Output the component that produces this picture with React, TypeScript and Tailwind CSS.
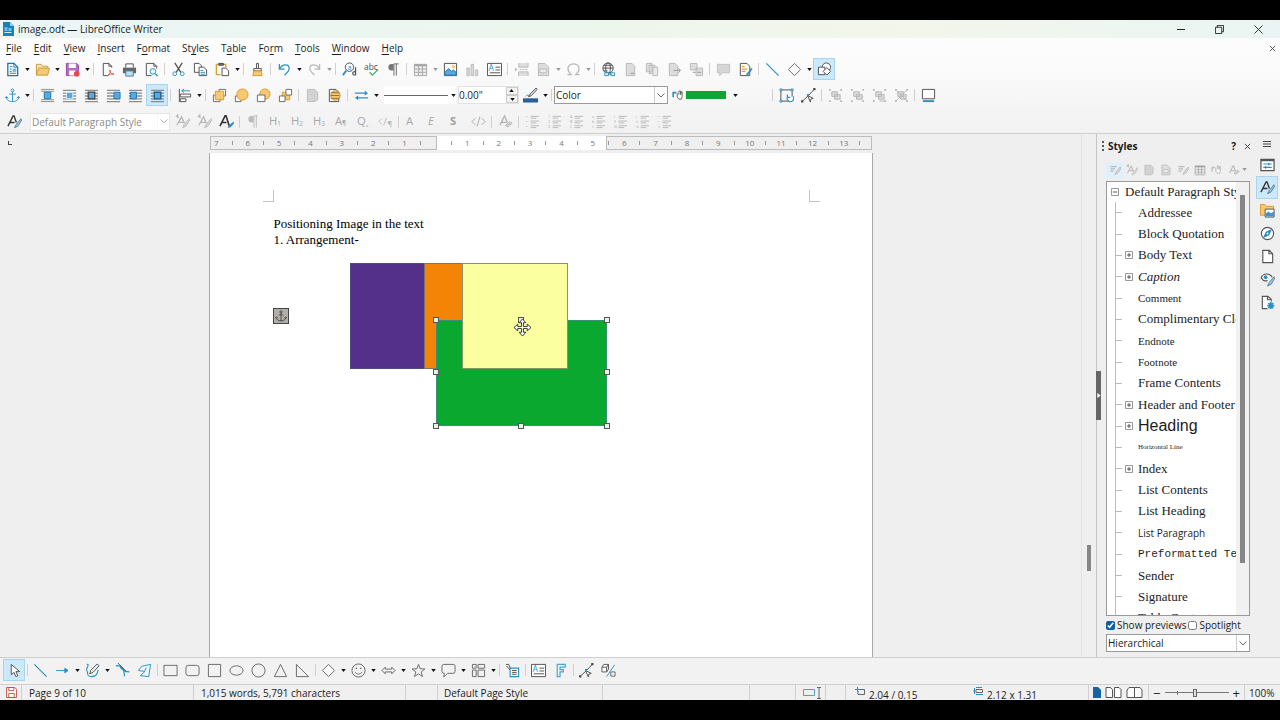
import { useState } from 'react';
import type { ReactNode } from 'react';
import clsx from 'clsx';

const DARK = '#4d4d4d';
const BLUE = '#2b8fc4';
const DIM = '#b9b9b9';
const GOLD = '#f5c871';

const wrapLines = (
  <path d="M1 2.500h14M1 5.500h14M1 8.500h14M1 11.500h14M1 14.500h14" stroke="#8c8c8c" strokeWidth="1.400" />
);

function letters(text: string, sub?: string, color = '#a8a8a8', extra = '') {
  return (
    <text x="1" y="12" fontSize="12" fill={color} className={extra}>
      {text}
      {sub && (
        <tspan fontSize="7" dy="1">
          {sub}
        </tspan>
      )}
    </text>
  );
}

function list(marks: string[]) {
  return (
    <g stroke="none" fill="#a8a8a8">
      <path d="M6 2.500h9M6 4.500h6M6 7.500h9M6 9.500h6M6 12.500h9M6 14.500h6" stroke="#b8b8b8" />
      {marks.map((m, i) => (
        <text key={i} x="1" y={4 + i * 5.500} fontSize="4">
          {m}
        </text>
      ))}
    </g>
  );
}

function group(extra: ReactNode) {
  return (
    <g stroke={DIM}>
      <path d="M4 4h6v5H4zM7 7h6v5H7z" fill="#d8d8d8" />
      {extra}
      <path d="M1 1h2v2H1zM13 1h2v2h-2zM1 13h2v2H1zM13 13h2v2h-2z" fill={DIM} stroke="none" />
    </g>
  );
}

const ICONS: Record<string, ReactNode> = {
  doc: (
    <>
      <path d="M3 1.500h6.500l4 4v9H3z" fill="#fff" stroke="#1779ba" strokeWidth="1.400" />
      <path d="M9.500 1.500v4h4" stroke="#1779ba" />
      <path d="M5 5h3M5 7.500h2M5 12h7M5 10h2" stroke="#1779ba" />
      <path d="M8 7h4v3.500H8z" fill="#6fb6e0" stroke="none" />
    </>
  ),
  open: (
    <>
      <path d="M1.500 14V2.500h5l1.500 2h5.500V7" fill="#fbe3b0" stroke="#c9993f" />
      <path d="M1.500 14l2.500-7.500h11.500L13.500 14z" fill={GOLD} stroke="#c9993f" />
    </>
  ),
  save: (
    <>
      <path d="M1.500 1.500h11l2 2v11h-13z" fill="#b46cc0" stroke="#8e44a0" />
      <path d="M4 1.500h7.500v5H4zM4.500 9h6.500v5.500H4.500z" fill="#fff" stroke="none" />
      <circle cx="12.500" cy="12.500" r="3" fill="#e5484d" stroke="none" />
    </>
  ),
  pdf: (
    <>
      <path d="M12.500 6V4.500l-3-3h-6v13h5M9.500 1.500v3h3" stroke={DARK} />
      <path d="M8.500 14.500c3-3 3-6 2-6s1 5 4.500 4.500c-2-1-5 0-6.500 1.500z" stroke="#d9534f" />
    </>
  ),
  print: (
    <>
      <path d="M4 6V2h8v4" fill="#fff" stroke={DARK} />
      <path d="M1 6h14v6H1z" fill="#666" stroke="none" />
      <path d="M4 9.500h8V15H4z" fill="#bfe0f2" stroke="#3b7ea3" />
    </>
  ),
  preview: (
    <>
      <path d="M13.500 7V4.500l-3-3h-8v13H8M10.500 1.500v3h3" stroke={DARK} />
      <circle cx="9.500" cy="10" r="3" stroke={BLUE} fill="#e6f4fb" />
      <path d="M12 12.500l2.500 2.500" stroke={BLUE} strokeWidth="1.500" />
    </>
  ),
  cut: (
    <>
      <path d="M4 1l6.500 10M12 1L5.500 11" stroke={DARK} strokeWidth="1.300" />
      <circle cx="4" cy="12.500" r="2" stroke={BLUE} />
      <circle cx="12" cy="12.500" r="2" stroke={BLUE} />
    </>
  ),
  copy: (
    <>
      <path d="M1.500 1.500h5l2.500 2.500v7H1.500z" fill="#fff" stroke={DARK} />
      <path d="M6.500 5.500h5l3 3v6h-8z" fill="#fff" stroke={DARK} />
      <path d="M8 9h3M8 11h5M8 13h5" stroke={BLUE} />
    </>
  ),
  paste: (
    <>
      <path d="M6 13.500H1.500v-11h10V6" fill="#fff" stroke="#e0a030" strokeWidth="1.500" />
      <path d="M4 1.500h5v2H4z" fill="#777" stroke={DARK} />
      <path d="M7.500 6.500h4l3 3v5h-7z" fill="#fff" stroke={DARK} />
    </>
  ),
  brush: (
    <>
      <path d="M7 1.500h2V7H7z" fill="#fff" stroke={DARK} />
      <path d="M4 7h8v2.500H4z" fill="#fff" stroke={DARK} />
      <path d="M4 9.500h8l1 5H3z" fill={GOLD} stroke="#d99a2b" />
    </>
  ),
  undo: (
    <path d="M2.500 2v5.500H8M2.500 7.500C6 1.500 13 2 13 7c0 3-3 5-5 7" stroke={BLUE} strokeWidth="1.300" />
  ),
  redo: (
    <path d="M13.500 2v5.500H8M13.500 7.500C10 1.500 3 2 3 7c0 3 3 5 5 7" stroke={DIM} strokeWidth="1.300" />
  ),
  find: (
    <>
      <circle cx="8" cy="5.500" r="4.500" stroke={DARK} />
      <path d="M4.500 9l-3.500 5" stroke={BLUE} strokeWidth="2" />
      <text x="6" y="8" fontSize="7" fill={BLUE}>
        a
      </text>
      <path d="M14.500 5.500v8.500M14.500 10.500c-4-1.500-4 5 0 3" stroke={DARK} strokeWidth="1.200" />
    </>
  ),
  spell: (
    <>
      <text x="0" y="8" fontSize="9" fill={DARK}>
        abc
      </text>
      <path d="M6 11l3 3 6-6" stroke="#4caf72" strokeWidth="1.400" />
    </>
  ),
  pilcrow: (
    <>
      <path d="M8 2H6a3 3 0 000 7h2z" fill="#777" stroke="none" />
      <path d="M8.500 14.500V2h5M11 2v12.500" stroke="#666" />
    </>
  ),
  table: (
    <>
      <path d="M1.500 2.500h13v12h-13z" fill="#eee" stroke="#a5a5a5" />
      <path d="M1.500 3.500h13" stroke="#a5a5a5" strokeWidth="2" />
      <path d="M1.500 7.500h13M1.500 11h13M6 4v10M10 4v10" stroke="#a5a5a5" />
    </>
  ),
  image: (
    <>
      <path d="M1.500 1.500h13v13h-13z" fill="#fff" stroke={DARK} />
      <circle cx="11" cy="5" r="1.800" fill={GOLD} stroke="none" />
      <path d="M2 14V11l4-4 3 3 2-1.500 3 2.500v3z" fill="#58a9de" stroke="#1b75b5" />
    </>
  ),
  chart: <path d="M2 6.500h2.500v8H2zM6.500 2.500H9v12H6.500zM11 8.500h2.500v6H11z" fill="#dcdcdc" stroke={DIM} />,
  textbox: (
    <>
      <path d="M.5 1.500h15v13H.5z" fill="#fff" stroke={DARK} />
      <text x="1.500" y="10" fontSize="9" fill={BLUE}>
        A
      </text>
      <path d="M9 5.500h5M9 8.500h5M3 11.500h11" stroke={DARK} />
    </>
  ),
  pagebreak: (
    <>
      <path d="M5 1v4.500h10V1M5 15v-4.500h10V15" fill="#ddd" stroke={DIM} />
      <path d="M6 8h9" stroke={DIM} strokeDasharray="2 1" />
      <path d="M1 6l3 2-3 2z" fill={DIM} stroke="none" />
    </>
  ),
  field: (
    <>
      <path d="M2.500 1.500h7l4 4v9h-11z" fill="#ddd" stroke={DIM} />
      <path d="M4 7.500h7v4H4z" fill="#eee" stroke={DIM} />
    </>
  ),
  omega: <path d="M1.500 13.500h4C-1 7 3 2 8 2s9 5 2.500 11.500h4" stroke={DIM} strokeWidth="1.400" />,
  link: (
    <>
      <circle cx="7.500" cy="6.500" r="5.500" stroke={DARK} />
      <ellipse cx="7.500" cy="6.500" rx="2.500" ry="5.500" stroke={DARK} />
      <path d="M2 6.500h11M3 3.500h9M3 9.500h4" stroke={DARK} />
      <path d="M4 11.500h4v3H4zM10.500 11.500h4v3h-4zM7 13h4.500" fill="#fff" stroke={BLUE} />
    </>
  ),
  footnote: (
    <>
      <path d="M3.500 1.500h6l3 3v10h-9z" fill="#ddd" stroke={DIM} />
      <path d="M8 12h4" stroke="#999" />
    </>
  ),
  endnote: (
    <>
      <path d="M1.500 1.500h6v9h-6zM4.500 3.500h6v9h-6z" fill="#ddd" stroke={DIM} />
      <path d="M8.500 5.500h5v9h-5z" fill="#e8e8e8" stroke={DIM} />
    </>
  ),
  bookmark: (
    <>
      <path d="M2.500 1.500h6l3 3v10h-9z" fill="#ddd" stroke={DIM} />
      <path d="M7 9h7M12 6.500L14.500 9 12 11.500" stroke="#999" />
    </>
  ),
  crossref: (
    <>
      <path d="M1.500 1.500h7v7h-7zM7.500 6.500h7v8h-7z" fill="#ddd" stroke={DIM} />
      <path d="M4 11h3M9 11h4" stroke="#999" />
    </>
  ),
  comment: <path d="M1.500 2.500h13v9H7l-3 3v-3H1.500z" fill="#d6d6d6" stroke="#c0c0c0" />,
  track: (
    <>
      <path d="M2.500 1.500h7l3 3v10h-10z" fill="#fff" stroke={DARK} />
      <path d="M4 5h3M4 7.500h6M4 10h4" stroke="#e0a030" strokeWidth="1.400" />
      <path d="M14.500 6l-5 6-1 2.500 2.500-1 4.500-6z" fill={BLUE} stroke="none" />
    </>
  ),
  line: <path d="M1.500 1.500l13 13" stroke={BLUE} strokeWidth="1.200" />,
  diamond: <path d="M8 1.500L14.500 8 8 14.500 1.500 8z" fill="#fafafa" stroke="#666" />,
  shapes: (
    <>
      <circle cx="10" cy="5.500" r="4.500" fill="#fff" stroke={DARK} />
      <path d="M1.500 5.500h7v8h-7z" fill="#fff" stroke={DARK} />
      <path d="M10.500 6l4 4-4 4-4-4z" fill="#fff" stroke={DARK} />
    </>
  ),
  anchor: (
    <>
      <circle cx="8" cy="2.500" r="1.500" stroke={BLUE} />
      <path d="M8 4v10.500M4.500 6.500h7M1.500 9.500c0 3.500 3 5 6.500 5s6.500-1.500 6.500-5M0 11l1.500-2L3.500 11M12.500 11l2-2L16 11" stroke={BLUE} />
    </>
  ),
  wrapOff: (
    <>
      <path d="M1 1.500h14M1 3.500h14M1 12.500h14M1 14.500h14" stroke="#8c8c8c" />
      <path d="M4.500 4.500h7v7h-7z" fill="#5aa9dd" stroke="#1f78b4" />
    </>
  ),
  wrapPage: (
    <>
      {wrapLines}
      <path d="M4.500 4.500h7v7h-7z" fill="#5aa9dd" stroke="#e9f5fc" />
    </>
  ),
  wrapOptimal: (
    <>
      {wrapLines}
      <path d="M4.500 4.500h7v7h-7z" fill="#5aa9dd" stroke="#444" strokeWidth="1.300" />
    </>
  ),
  wrapLeft: (
    <>
      {wrapLines}
      <path d="M8.500 4.500h6.500v7H8.500z" fill="#5aa9dd" stroke="#1f78b4" />
    </>
  ),
  wrapRight: (
    <>
      {wrapLines}
      <path d="M2.500 4.500h6.500v7H2.500z" fill="#5aa9dd" stroke="#1f78b4" />
    </>
  ),
  wrapThrough: (
    <>
      {wrapLines}
      <path d="M4.500 4.500h7v7h-7z" fill="#5aa9dd" stroke="#1a5e92" strokeWidth="1.400" />
    </>
  ),
  align: (
    <>
      <path d="M2.500 1v14" stroke={DARK} />
      <path d="M3.500 6.500h11v3h-11zM3.500 11.500h6v3h-6z" fill="#fff" stroke={DARK} />
      <path d="M14 3H5M7.500 1L5 3l2.500 2" stroke={BLUE} />
    </>
  ),
  front: (
    <>
      <path d="M7.500 1.500h7v7h-7zM1.500 7.500h7v7h-7z" fill="#fff" stroke="#666" />
      <path d="M3.500 3.500h9v9h-9z" fill={GOLD} stroke="#d99a2b" />
    </>
  ),
  forward: (
    <>
      <path d="M1.500 8.500h6v6h-6z" fill="#fff" stroke="#666" />
      <circle cx="9" cy="7" r="6" fill={GOLD} stroke="#d99a2b" />
    </>
  ),
  backward: (
    <>
      <circle cx="9.500" cy="6.500" r="5.500" fill={GOLD} stroke="#d99a2b" />
      <path d="M1.500 7.500h8v7h-8z" fill="#fff" stroke="#666" />
    </>
  ),
  back: (
    <>
      <path d="M4.500 4.500h8v8h-8z" fill={GOLD} stroke="#d99a2b" />
      <path d="M8.500 1.500h6v6h-6zM1.500 8.500h6v6h-6z" fill="#fff" stroke="#666" />
    </>
  ),
  toFore: <path d="M2.500 1.500h8l3 3v8l-3 2h-8z" fill="#d2d2d2" stroke="#bdbdbd" />,
  toBack: (
    <>
      <path d="M2.500 1.500h7l3 3v10h-10z" fill="#fff" stroke={DARK} />
      <circle cx="9" cy="8" r="5" fill={GOLD} stroke="#c98a1f" />
      <path d="M4 5h9M4 8h9M4 11h9" stroke="#8a7040" />
    </>
  ),
  arrows: (
    <>
      <path d="M1 5.500h11M4 10.500h11" stroke={BLUE} strokeWidth="1.200" />
      <path d="M11.500 3l3.500 2.500L11.500 8zM4.500 8L1 10.500 4.500 13z" fill={BLUE} stroke="none" />
    </>
  ),
  lineColor: (
    <>
      <path d="M14 0L7.500 6.500l-1.500 3 3-1.500L15 1.500z" fill="#e8e8e8" stroke={DARK} />
      <path d="M3 9c1-2 3-2 4 0" stroke={BLUE} />
      <path d="M0 11h16v4.500H0z" fill="#2a6099" stroke="none" />
    </>
  ),
  bucket: (
    <>
      <path d="M1.500 10V4.500h4" stroke={BLUE} strokeWidth="2" />
      <path d="M6.500 5v5l2 2.500h3l1-3.500V3.500h-1.500V7M8.500 7V2.500h2V7" fill="#fff" stroke={DARK} />
    </>
  ),
  rotate: (
    <>
      <path d="M2 2h12v12H2z" stroke={DARK} />
      <path d="M1 1h2v2H1zM13 1h2v2h-2zM1 13h2v2H1z" fill="#fff" stroke={BLUE} />
      <path d="M9 9.500a3.500 3.500 0 106-.5M9 7v3h3" fill="#fff" stroke={BLUE} strokeWidth="1.200" />
    </>
  ),
  points: (
    <>
      <path d="M1.500 14L8 8l6.500-7" stroke={DARK} />
      <path d="M7 8l6 3-2.500.8L10 15z" fill="#fff" stroke={DARK} />
      <path d="M0 13h2.500v2.500H0zM13 0h2.500v2.500H13z" fill={DARK} stroke="none" />
      <path d="M6.500 6.500h2v2h-2z" fill={BLUE} stroke="none" />
    </>
  ),
  group: group(null),
  ungroup: group(<path d="M10 13l4-4" />),
  enter: group(<path d="M8 14h6" />),
  exit: group(<path d="M2 2l12 12M14 2L2 14" />),
  caption: (
    <>
      <path d="M1.500 1.500h13v10h-13z" fill="#fff" stroke={DARK} />
      <path d="M2 14h12" stroke={BLUE} strokeWidth="2" />
    </>
  ),
  styleA: (
    <>
      <path d="M1 13L6.500 2h1L10 9M3.500 9H8" stroke="#333" strokeWidth="1.500" />
      <path d="M15 5l-5 6-2 3.500 3.500-1.500L16 6z" fill="#9fcde8" stroke="#4a7d98" />
    </>
  ),
  styleDim: (
    <>
      <path d="M2 12L7 3l3 7M4 9h5M1 2l3 2M3 0v4" stroke={DIM} strokeWidth="1.400" />
      <path d="M15 5l-5 6-2 3.500 3.500-1.500L16 6z" fill="#ddd" stroke={DIM} />
    </>
  ),
  styleEdit: (
    <>
      <path d="M1 13L6.500 2h1L11 13M3.500 9H8" stroke="#333" strokeWidth="1.700" />
      <path d="M15.500 8l-3.500 3-3 4 3.500-1 3.500-4z" fill={BLUE} stroke="none" />
    </>
  ),
  brushDim: (
    <>
      <path d="M2 3.500h8M2 6.500h6M2 9.500h4" stroke={DIM} strokeWidth="1.600" />
      <path d="M15 4l-5 6-2 4 3.500-2L16 6z" fill="#ddd" stroke={DIM} strokeWidth="1.300" />
    </>
  ),
  pilcrowDim: (
    <>
      <path d="M8 2H6a3 3 0 000 7h2z" fill="#bbb" stroke="none" />
      <path d="M8.500 14.500V2h4M11 2v12.500" stroke="#bbb" />
    </>
  ),
  h1: letters('H', '1'),
  h2: letters('H', '2'),
  h3: letters('H', '3'),
  para: letters('A', '¶'),
  quote: letters('Q', '„'),
  code: (
    <>
      <path d="M4 5L1 8l3 3M9 4l-3 8" stroke={DIM} />
      <text x="10" y="13" fontSize="8" fill="#b0b0b0">
        ¶
      </text>
    </>
  ),
  plainA: letters(' A', undefined, '#a8a8a8'),
  emph: letters(' E', undefined, '#a8a8a8', 'italic'),
  strong: letters(' S', undefined, '#a0a0a0', 'font-bold'),
  src: <path d="M4.500 4.500L1 8l3.500 3.500M11.500 4.500L15 8l-3.500 3.500M9.500 3l-3 10" stroke="#a8a8a8" />,
  clear: (
    <>
      <path d="M2 12L7 2l3 7M4 9h5" stroke="#b0b0b0" strokeWidth="1.300" />
      <path d="M8 12l5-4 2 2-5 4z" fill="#ccc" stroke={DIM} />
    </>
  ),
  bullets: list(['•', '•', '•']),
  numbers: list(['1', '2', '3']),
  upper: list(['A', 'B', 'C']),
  lower: list(['a', 'b', 'c']),
  roman: list(['I', 'II', 'III']),
  romanLow: list(['i', 'ii', 'iii']),
  noList: list(['•', '•', '×']),
  cursor: <path d="M4.500 1.500v11l3-2.500 2 4.500 2-1-2-4.300h4z" fill="#fff" stroke={DARK} />,
  lineArrow: <path d="M1 8h12M10.500 5.500L14 8l-3.500 2.500z" fill={BLUE} stroke={BLUE} />,
  pen: (
    <>
      <path d="M2 1.500c4 0-2 4 0 7s-1 6 5 6 6-4 7-7" stroke={BLUE} strokeWidth="1.200" />
      <path d="M13 1L6 8l-1 3.500L8.500 10l6.500-7z" fill="#eee" stroke={DARK} />
    </>
  ),
  connector: (
    <>
      <path d="M1 3c6-1 9 3 9 11M5.500 4c2 4 5 5.500 10 5.500" stroke={BLUE} strokeWidth="1.300" />
      <path d="M3 0l9 9" stroke={DARK} />
    </>
  ),
  polygon: (
    <>
      <path d="M5 3.500l9.500-2-2 13-9-1 5-4.500L1.500 8z" fill="#eef7fc" stroke={BLUE} />
      <path d="M8 9l2-4" stroke={BLUE} />
    </>
  ),
  rect: <path d="M1 2.500h14v11H1z" stroke="#666" />,
  rounded: <rect x="1" y="2.500" width="14" height="11" rx="2.500" stroke="#666" />,
  square: <path d="M1.500 1.500h13v13h-13z" stroke="#666" />,
  oval: <ellipse cx="8" cy="8" rx="7" ry="5" stroke="#666" />,
  circle: <circle cx="8" cy="8" r="7" stroke="#666" />,
  triangle: <path d="M8 1.500l6.500 13h-13z" stroke="#666" />,
  right: <path d="M1.500 1.500l13 13h-13z" stroke="#666" />,
  smile: (
    <>
      <circle cx="8" cy="8" r="7" stroke="#666" />
      <path d="M4.500 9.500c1 3 6 3 7 0" stroke="#666" />
      <path d="M5 5h1.500v1.500H5zM9.500 5H11v1.500H9.500z" fill="#666" stroke="none" />
    </>
  ),
  double: <path d="M1 8l3.500-3.500v2h7v-2L15 8l-3.500 3.500v-2h-7v2z" stroke="#666" />,
  star: <path d="M8 1.500l1.800 4.700 5 .2-4 3.100 1.500 4.900L8 11.600l-4.300 2.800 1.500-4.900-4-3.100 5-.2z" stroke="#666" />,
  callout: <path d="M3 1.500h10q2 0 2 2v5.500q0 2-2 2H7l-4 4 .5-4Q1 11 1 9V3.500q0-2 2-2z" stroke="#666" />,
  flow: (
    <path d="M1.500 1.500h4v4h-4zM7.500 1.500h7v4h-7zM1.500 7.500h4v7h-4zM7.500 7.500h7v7h-7z" stroke="#666" />
  ),
  calloutBox: (
    <>
      <path d="M1 1.500h3l2.500 6M1.500 3l4 4.500" stroke={DARK} />
      <path d="M5.500 5.500h9v9h-9z" fill="#fff" stroke={BLUE} strokeWidth="1.200" />
      <path d="M7.500 8h5M7.500 10h5M7.500 12h5" stroke={DARK} />
    </>
  ),
  fontwork: <path d="M4.500 1.500h8.500v3H7.500V7H11v2.500H7.500v5h-3z" fill="#eaf6fc" stroke="#4aa5d0" strokeWidth="1.300" />,
  extrude: (
    <>
      <path d="M1 4.500h5v5H1zM1 4.500l2-3h5l-2 3M8 1.500v5l-2 3" fill="#fff" stroke="#555" />
      <path d="M14.500 2L6 14.500" stroke={BLUE} />
      <path d="M10.500 9.500h4.500v4.500h-4.500z" stroke="#666" />
    </>
  ),
  props: (
    <>
      <path d="M1 2.500h14v12H1z" fill="#fff" stroke="#555" strokeWidth="1.300" />
      <path d="M1 3.500h14" stroke="#555" strokeWidth="2" />
      <path d="M3.500 7.500h9M3.500 11h9M9.500 6v3M6 9.500v3" stroke={BLUE} strokeWidth="1.200" />
    </>
  ),
  gallery: (
    <>
      <path d="M.5 13V1.500H5L6.500 3.500h8v9.500z" fill={GOLD} stroke="#d99a2b" />
      <path d="M5.500 6.500h9.500v8.500H5.500z" fill="#fff" stroke="#555" />
      <path d="M6 14.500v-3l3-2.500 2.500 2 3.500-2v5.500z" fill="#3f93cf" stroke="none" />
    </>
  ),
  compass: (
    <>
      <circle cx="8" cy="8" r="6.500" fill="#fff" stroke="#555" strokeWidth="1.200" />
      <path d="M12 4L9.500 9.500 4 12l2.500-5.500z" fill={BLUE} stroke={BLUE} />
      <circle cx="8" cy="8" r="1" fill="#fff" stroke="none" />
    </>
  ),
  page: <path d="M3 1.500h7l3.500 3.500v9.500H3zM9.500 1.500V5h4" fill="#fff" stroke="#555" strokeWidth="1.200" />,
  inspector: (
    <>
      <path d="M1 6C4 1 10 1 13 5.500M1 6c2 3 5 4 7 3" fill="#fff" stroke="#555" strokeWidth="1.200" />
      <circle cx="6" cy="5.500" r="2" fill={BLUE} stroke="none" />
      <path d="M15 5l-5 6-2 4 4-2 4-7z" fill="#9fcde8" stroke="#4a7d98" />
    </>
  ),
  gearDoc: (
    <>
      <path d="M8 14.500H2.500v-13h6l3.500 3V7M8 1.500V5h4" fill="#fff" stroke="#555" strokeWidth="1.200" />
      <path d="M11.500 7.500v7.500M7.800 11.300h7.500M9 8.500l5 5.500M14 8.500L9 14" stroke={BLUE} strokeWidth="1.700" />
    </>
  ),
};

function Icon({ name, className = 'size-4' }: { name: string; className?: string }) {
  return (
    <svg viewBox="0 0 16 16" fill="none" className={clsx('shrink-0', className)} aria-hidden="true">
      {ICONS[name]}
    </svg>
  );
}

function Caret({ dim }: { dim?: boolean }) {
  return (
    <svg viewBox="0 0 6 4" className="h-[3px] w-[5px] shrink-0" aria-hidden="true">
      <path d="M0 0h6L3 4z" fill={dim ? '#999' : '#111'} />
    </svg>
  );
}

type Item = { icon: string; label: string; drop?: boolean; dim?: boolean; active?: boolean } | '|';

const t = (icon: string, label: string, opts = ''): Item => ({
  icon,
  label,
  drop: opts.includes('v'),
  dim: opts.includes('d'),
  active: opts.includes('a'),
});

const STANDARD: Item[] = [
  t('doc', 'New', 'v'),
  t('open', 'Open', 'v'),
  t('save', 'Save', 'v'),
  '|',
  t('pdf', 'Export as PDF'),
  t('print', 'Print'),
  t('preview', 'Print preview'),
  '|',
  t('cut', 'Cut'),
  t('copy', 'Copy'),
  t('paste', 'Paste', 'v'),
  '|',
  t('brush', 'Clone formatting'),
  '|',
  t('undo', 'Undo', 'v'),
  t('redo', 'Redo', 'vd'),
  '|',
  t('find', 'Find and replace'),
  t('spell', 'Spelling'),
  t('pilcrow', 'Formatting marks'),
  '|',
  t('table', 'Table', 'vd'),
  t('image', 'Image'),
  t('chart', 'Chart', 'd'),
  t('textbox', 'Text box'),
  '|',
  t('pagebreak', 'Page break', 'd'),
  t('field', 'Field', 'vd'),
  t('omega', 'Special character', 'vd'),
  '|',
  t('link', 'Hyperlink'),
  t('footnote', 'Footnote', 'd'),
  t('endnote', 'Endnote', 'd'),
  t('bookmark', 'Bookmark', 'd'),
  t('crossref', 'Cross-reference', 'd'),
  '|',
  t('comment', 'Comment', 'd'),
  t('track', 'Track changes'),
  '|',
  t('line', 'Insert line'),
  t('diamond', 'Basic shapes', 'v'),
  t('shapes', 'Show draw functions', 'a'),
];

const OBJECT: Item[] = [
  t('anchor', 'Anchor', 'v'),
  '|',
  t('wrapOff', 'No wrap'),
  t('wrapPage', 'Parallel wrap'),
  t('wrapOptimal', 'Optimal wrap'),
  t('wrapLeft', 'Wrap before'),
  t('wrapRight', 'Wrap after'),
  t('wrapThrough', 'Wrap through', 'a'),
  '|',
  t('align', 'Align', 'v'),
  '|',
  t('front', 'Bring to front'),
  t('forward', 'Forward one'),
  t('backward', 'Back one'),
  t('back', 'Send to back'),
  '|',
  t('toFore', 'To foreground', 'd'),
  t('toBack', 'To background'),
  '|',
  t('arrows', 'Arrow style', 'v'),
];

const OBJECT_END: Item[] = [
  '|',
  t('rotate', 'Rotate'),
  t('points', 'Points'),
  '|',
  t('group', 'Group', 'd'),
  t('ungroup', 'Ungroup', 'd'),
  t('enter', 'Enter group', 'd'),
  t('exit', 'Exit group', 'd'),
  '|',
  t('caption', 'Caption'),
];

const FORMATTING: Item[] = [
  t('styleDim', 'Update style', 'd'),
  t('styleDim', 'New style', 'd'),
  t('styleEdit', 'Edit style'),
  '|',
  t('pilcrowDim', 'Default paragraph', 'd'),
  t('h1', 'Heading 1', 'd'),
  t('h2', 'Heading 2', 'd'),
  t('h3', 'Heading 3', 'd'),
  t('para', 'Body', 'd'),
  t('quote', 'Quotation', 'd'),
  t('code', 'Preformatted', 'd'),
  '|',
  t('plainA', 'No character style', 'd'),
  t('emph', 'Emphasis', 'd'),
  t('strong', 'Strong', 'd'),
  t('src', 'Source', 'd'),
  '|',
  t('clear', 'Clear formatting', 'd'),
  '|',
  t('bullets', 'Bullets', 'd'),
  t('numbers', 'Numbering', 'd'),
  t('upper', 'Uppercase list', 'd'),
  t('lower', 'Lowercase list', 'd'),
  t('roman', 'Roman list', 'd'),
  t('romanLow', 'Lowercase roman list', 'd'),
  t('noList', 'No list', 'd'),
];

const DRAWING: Item[] = [
  t('cursor', 'Select', 'a'),
  '|',
  t('line', 'Line'),
  t('lineArrow', 'Lines and arrows', 'v'),
  t('pen', 'Curves', 'v'),
  t('connector', 'Connector'),
  t('polygon', 'Polygon'),
  '|',
  t('rect', 'Rectangle'),
  t('rounded', 'Rounded rectangle'),
  t('square', 'Square'),
  t('oval', 'Ellipse'),
  t('circle', 'Circle'),
  t('triangle', 'Triangle'),
  t('right', 'Right triangle'),
  '|',
  t('diamond', 'Basic', 'v'),
  t('smile', 'Symbols', 'v'),
  t('double', 'Block arrows', 'v'),
  t('star', 'Stars', 'v'),
  t('callout', 'Callouts', 'v'),
  t('flow', 'Flowchart', 'v'),
  '|',
  t('calloutBox', 'Callout box'),
  '|',
  t('textbox', 'Insert text box'),
  t('fontwork', 'Fontwork'),
  '|',
  t('points', 'Edit points'),
  t('extrude', 'Extrusion'),
];

function Tools({ items, tight }: { items: Item[]; tight?: boolean }) {
  return (
    <>
      {items.map((it, i) =>
        it === '|' ? (
          <span key={i} className={clsx('flex shrink-0 justify-center', tight ? 'w-1' : 'w-[5px]')}>
            <span className="h-3 w-px bg-[#d0d0d0]" />
          </span>
        ) : (
          <span key={i} className="flex shrink-0 items-center">
            <button
              aria-label={it.label}
              disabled={it.dim}
              className={clsx(
                'flex h-[22px] w-[22px] items-center justify-center',
                it.active && 'border border-[#a9d4f0] bg-[#cce8fb]',
              )}
            >
              <Icon name={it.icon} className="size-[15px]" />
            </button>
            {it.drop && (
              <button aria-label={`${it.label} options`} className="flex h-[22px] w-2 items-center justify-center">
                <Caret dim={it.dim} />
              </button>
            )}
          </span>
        ),
      )}
    </>
  );
}

function Chevron() {
  return (
    <svg viewBox="0 0 8 5" className="h-[5px] w-2" fill="none" stroke="#666" aria-hidden="true">
      <path d="M.5.5L4 4 7.500.5" />
    </svg>
  );
}

const MENU = [
  ['', 'F', 'ile'],
  ['', 'E', 'dit'],
  ['', 'V', 'iew'],
  ['', 'I', 'nsert'],
  ['F', 'o', 'rmat'],
  ['St', 'y', 'les'],
  ['T', 'a', 'ble'],
  ['Fo', 'r', 'm'],
  ['', 'T', 'ools'],
  ['', 'W', 'indow'],
  ['', 'H', 'elp'],
];

function Header() {
  return (
    <header>
      <div className="flex h-[18px] items-center bg-[linear-gradient(90deg,#eaf5f6,#edf6ec_45%,#f2f6ea_70%,#eaf5f3)] pl-0.5">
        <svg viewBox="0 0 12 14" className="h-[14px] w-3" aria-hidden="true">
          <path d="M1 0h7l4 4v10H1z" fill="#1681bd" />
          <path d="M8 0l4 4H8z" fill="#8fd0ee" />
          <path d="M2.500 6h3M2.500 8h3M2.500 10.500h7" stroke="#d6eefa" />
          <path d="M6.500 6h3v3h-3z" fill="#6fc0e8" />
        </svg>
        <h1 className="ml-1 text-[10px] leading-4">image.odt — LibreOffice Writer</h1>
        <div className="ml-auto flex items-center">
          <button aria-label="Minimize" className="flex w-10 justify-center">
            <span className="h-px w-2 bg-[#222]" />
          </button>
          <button aria-label="Restore" className="flex w-9 justify-center">
            <svg viewBox="0 0 10 10" className="size-[9px]" fill="none" stroke="#222">
              <path d="M.5 2.500h7v7h-7zM2.500 2.500v-2h7v7h-2" />
            </svg>
          </button>
          <button aria-label="Close" className="flex w-[43px] justify-center">
            <svg viewBox="0 0 10 10" className="size-[9px]" stroke="#222">
              <path d="M.5.5l9 9M9.500.5l-9 9" />
            </svg>
          </button>
        </div>
      </div>
      <nav className="flex h-5 items-center gap-3 bg-[#fcfcfc] pr-1 pl-1.5 text-[10px]">
        {MENU.map(([a, u, b]) => (
          <button key={a + u + b} className="leading-4">
            {a}
            <span className="underline underline-offset-2">{u}</span>
            {b}
          </button>
        ))}
        <button aria-label="Close document" className="ml-auto">
          <svg viewBox="0 0 8 8" className="size-[7px]" stroke="#444">
            <path d="M1 1l6 6M7 1L1 7" />
          </svg>
        </button>
      </nav>
      <div className="bg-linear-to-b from-[#fcfcfc] to-[#f1f1f1]">
        <div className="flex h-[22px] items-center pl-px">
          <Tools items={STANDARD} />
        </div>
        <div className="flex h-[30px] items-center pl-px">
          <Tools items={OBJECT} />
          <button aria-label="Line style" className="ml-1 flex h-[18px] w-[72px] items-center justify-between bg-white">
            <span className="h-px w-16 bg-[#666]" />
            <Caret />
          </button>
          <div className="ml-0.5 flex h-[18px] w-[61px] border border-[#e2e2e2] bg-white">
            <input aria-label="Line width" defaultValue={'0.00"'} className="w-full min-w-0 text-[10px] leading-4 outline-none" />
            <span className="flex w-3 shrink-0 flex-col">
              <button aria-label="Increase" className="flex flex-1 rotate-180 items-center justify-center border border-[#ccc] bg-[#f3f3f3]">
                <Caret />
              </button>
              <button aria-label="Decrease" className="flex flex-1 items-center justify-center border border-[#ccc] bg-[#f3f3f3]">
                <Caret />
              </button>
            </span>
          </div>
          <Tools items={[t('lineColor', 'Line color', 'v'), '|']} />
          <div className="relative flex h-[18px] w-[114px] items-center">
            <select aria-label="Area fill type" className="h-full w-full appearance-none border border-[#999] bg-white pl-px text-[10px] leading-4">
              <option>Color</option>
            </select>
            <span className="pointer-events-none absolute inset-y-px right-px flex w-[13px] items-center justify-center border-l border-[#ccc]">
              <Chevron />
            </span>
          </div>
          <button aria-label="Fill color" className="ml-1 flex h-[22px] w-[66px] items-center gap-px">
            <Icon name="bucket" className="size-[13px]" />
            <span className="mr-1.5 h-2 w-10 bg-[#10a532]" />
            <Caret />
          </button>
          <span className="w-8" />
          <Tools items={OBJECT_END} />
        </div>
        <div className="flex h-6 items-center border-b border-[#cfcfcf] pl-[3px]">
          <Tools items={[t('styleA', 'Styles')]} />
          <div className="mr-px ml-[5px] flex h-[18px] w-[140px] items-center border border-[#e6e6e6] bg-white">
            <input
              aria-label="Paragraph style"
              disabled
              value="Default Paragraph Style"
              className="w-full min-w-0 pl-px text-[10px] leading-4 text-[#8a8a8a]"
            />
            <span className="flex h-full w-3 shrink-0 items-center justify-center border-l border-[#eee] opacity-50">
              <Chevron />
            </span>
          </div>
          <Tools items={FORMATTING} />
        </div>
      </div>
    </header>
  );
}

// Labels -7..13, each followed by a half-inch tick.
const INCHES = Array.from({ length: 21 }, (_, i) => i - 7);

function Ruler() {
  return (
    <div className="relative mx-auto h-[14px] w-[664px]">
      <div className="flex h-full px-px">
        <span className="w-[227px] border border-[#bdbdbd] bg-[#efefef]" />
        <span className="flex-1 bg-white" />
        <span className="w-[266px] border border-[#bdbdbd] bg-[#efefef]" />
      </div>
      <div className="absolute inset-0 flex items-center pr-[5px] text-[8px] leading-3 text-[#777]">
        {INCHES.map((n) => (
          <span key={n} className="flex flex-1 items-center">
            <span className="w-0 flex-1 text-center">{n === 0 ? '' : Math.abs(n)}</span>
            <span className="flex w-0 flex-1 justify-center">
              <span className="h-1 w-px bg-[#999]" />
            </span>
          </span>
        ))}
      </div>
    </div>
  );
}

const HANDLES = [
  'left-[-3px] top-[-3px]',
  'left-[82px] top-[-3px]',
  'right-[-3px] top-[-3px]',
  'left-[-3px] top-[49px]',
  'right-[-3px] top-[49px]',
  'left-[-3px] bottom-[-3px]',
  'left-[82px] bottom-[-3px]',
  'right-[-3px] bottom-[-3px]',
];

function Page() {
  return (
    <article className="relative mx-auto mt-[3px] w-[664px] flex-1 border-x border-[#a8a8a8] bg-white px-16 pt-[63px] font-['Liberation_Serif',serif] text-[13px] leading-4 text-black">
      <span className="absolute top-[37px] left-[53px] h-3 w-[11px] border-r border-b border-[#c4c4c4]" />
      <span className="absolute top-[37px] right-[52px] h-3 w-[11px] border-b border-l border-[#c4c4c4]" />
      <p>Positioning Image in the text</p>
      <p>
        1. Arrangement<b>-</b>
      </p>
      <span className="absolute top-[155px] left-[63px] flex size-4 items-center justify-center border border-[#444] bg-[#b0b0a8]">
        <svg viewBox="0 0 16 16" className="size-3" fill="none" stroke="#333" aria-hidden="true">
          <circle cx="8" cy="2.500" r="1.500" />
          <path d="M8 4v10.500M5 6.500h6M1.500 10c1 3.500 3 4.500 6.500 4.500s5.500-1 6.500-4.500M0 11l2-2 2 2M12 11l2-2 2 2" />
        </svg>
      </span>
      <span className="absolute top-[110px] left-[140px] h-[106px] w-[75px] border border-[#4c4a80] bg-[#55308a]" />
      <span className="absolute top-[110px] left-[214px] h-[106px] w-[60px] border border-[#7f7460] bg-[#f48406]" />
      <span className="absolute top-[167px] left-[226px] h-[106px] w-[171px] border border-[#3a8f78] bg-[#0ba82f]" />
      <span className="absolute top-[110px] left-[252px] h-[106px] w-[106px] border border-[#83946f] bg-[#fcff9f]" />
      <div className="absolute top-[167px] left-[226px] h-[106px] w-[171px]">
        {HANDLES.map((pos) => (
          <span key={pos} className={clsx('absolute size-[6px] border border-[#555] bg-[#e4f5e4]', pos)} />
        ))}
        <svg
          viewBox="0 0 20 20"
          className="absolute top-[-2px] left-[77px] size-[19px]"
          fill="#fff"
          stroke="#333"
          aria-hidden="true"
        >
          <path d="M10 1l3.500 4H11v4h4V6.500l4 3.500-4 3.500V11h-4v4h2.500L10 19l-3.500-4H9v-4H5v2.500L1 10l4-3.500V9h4V5H6.500z" />
        </svg>
      </div>
    </article>
  );
}

const STYLES: { name: string; cls?: string; open?: boolean }[] = [
  { name: 'Addressee' },
  { name: 'Block Quotation' },
  { name: 'Body Text', open: true },
  { name: 'Caption', cls: 'italic', open: true },
  { name: 'Comment', cls: 'text-[11px]' },
  { name: 'Complimentary Close' },
  { name: 'Endnote', cls: 'text-[11px]' },
  { name: 'Footnote', cls: 'text-[11px]' },
  { name: 'Frame Contents' },
  { name: 'Header and Footer', open: true },
  { name: 'Heading', cls: "text-[16px] font-['Liberation_Sans',sans-serif]", open: true },
  { name: 'Horizontal Line', cls: 'text-[7px]' },
  { name: 'Index', open: true },
  { name: 'List Contents' },
  { name: 'List Heading' },
  { name: 'List Paragraph', cls: "text-[10px] font-['Open_Sans','Noto_Sans',sans-serif]" },
  { name: 'Preformatted Text', cls: "text-[11px] font-['Liberation_Mono',monospace]" },
  { name: 'Sender' },
  { name: 'Signature' },
  { name: 'Table Contents' },
];

function Expander({ open }: { open?: boolean }) {
  return (
    <svg viewBox="0 0 8 8" className="size-2 shrink-0" fill="#fff" stroke="#999" aria-hidden="true">
      <path d="M.5.5h7v7h-7z" />
      <path d={open ? 'M2 4h4' : 'M2 4h4M4 2v4'} stroke="#555" />
    </svg>
  );
}

const PANEL_TOOLS = [
  ['brushDim', 'Paragraph styles'],
  ['styleDim', 'Character styles'],
  ['toFore', 'Frame styles'],
  ['field', 'Page styles'],
  ['brushDim', 'List styles'],
  ['table', 'Table styles'],
  ['bucket', 'Fill format mode'],
  ['clear', 'Style actions'],
];

function StylesPanel() {
  const [previews, setPreviews] = useState(true);
  const [spotlight, setSpotlight] = useState(false);

  return (
    <section className="flex w-[160px] shrink-0 flex-col border-l border-[#c4c4c4] pr-1.5 pl-[9px]">
      <div className="-ml-1 flex h-6 shrink-0 items-center text-[10px]">
        <span className="mr-1 h-[10px] border-l-2 border-dotted border-[#555]" />
        <h2 className="font-bold">Styles</h2>
        <button aria-label="Help" className="mr-2 ml-auto font-bold">
          ?
        </button>
        <button aria-label="Close panel" className="-mr-px">
          <svg viewBox="0 0 8 8" className="size-[7px]" stroke="#333">
            <path d="M1 1l6 6M7 1L1 7" />
          </svg>
        </button>
      </div>
      <div className="flex h-[23px] shrink-0 items-center">
        {PANEL_TOOLS.map(([icon, label], i) => (
          <button
            key={label}
            aria-label={label}
            className={clsx(
              'flex h-4 w-[17px] shrink-0 items-center justify-center',
              i === 0 && 'bg-[#dff0fb]',
              icon === 'bucket' && 'opacity-40 grayscale',
            )}
          >
            <Icon name={icon} className="size-3" />
          </button>
        ))}
        <Caret dim />
      </div>
      <div className="flex min-h-0 flex-1 overflow-hidden border border-[#999] bg-white">
        <div className="h-0 min-w-0 flex-1 font-['Liberation_Serif',serif] text-[13px] leading-4 whitespace-nowrap">
          <div className="flex h-5 items-center gap-1.5 overflow-hidden pl-1">
            <Expander open />
            <span>Default Paragraph Style</span>
          </div>
          <ul className="ml-2 flex h-[427px] flex-col border-l border-[#bbb]">
            {STYLES.map((s) => (
              <li key={s.name} className="flex flex-1 items-center overflow-hidden">
                <span className="h-px w-[6px] shrink-0 bg-[#bbb]" />
                <span className="mr-[5px] ml-[3px] flex w-2 shrink-0">{s.open && <Expander />}</span>
                <span className={s.cls}>{s.name}</span>
              </li>
            ))}
          </ul>
        </div>
        <div className="w-[13px] shrink-0 bg-[#f1f1f1] px-1 pt-[13px]">
          <div className="h-[368px] bg-[#868686]" />
        </div>
      </div>
      <div className="flex h-[18px] shrink-0 items-center text-[10px] leading-3 whitespace-nowrap">
        <label className="flex items-center gap-0.5">
          <input
            type="checkbox"
            checked={previews}
            onChange={(e) => setPreviews(e.target.checked)}
            className="size-[9px] accent-[#0f5ea8]"
          />
          Show previews
        </label>
        <label className="ml-0.5 flex items-center gap-0.5">
          <input
            type="checkbox"
            checked={spotlight}
            onChange={(e) => setSpotlight(e.target.checked)}
            className="size-[9px] accent-[#0f5ea8]"
          />
          Spotlight
        </label>
      </div>
      <div className="relative mb-[5px] flex h-[18px] shrink-0">
        <select aria-label="Style filter" className="h-full w-full appearance-none border border-[#999] bg-white pl-px text-[10px] leading-4">
          <option>Hierarchical</option>
        </select>
        <span className="pointer-events-none absolute inset-y-px right-px flex w-[13px] items-center justify-center border-l border-[#ccc]">
          <Chevron />
        </span>
      </div>
    </section>
  );
}

const TABS = [
  ['props', 'Properties'],
  ['styleA', 'Styles'],
  ['gallery', 'Gallery'],
  ['compass', 'Navigator'],
  ['page', 'Page'],
  ['inspector', 'Style inspector'],
  ['gearDoc', 'Manage changes'],
];

function TabBar() {
  return (
    <nav className="flex w-6 shrink-0 flex-col">
      <button aria-label="Sidebar settings" className="flex h-[19px] w-[22px] items-center justify-center">
        <svg viewBox="0 0 8 8" className="size-2" stroke="#444" aria-hidden="true">
          <path d="M0 1.500h8M0 4h8M0 6.500h8" />
        </svg>
      </button>
      {TABS.map(([icon, label]) => (
        <button
          key={icon}
          aria-label={label}
          className={clsx(
            'flex h-[23px] w-[22px] items-center justify-center',
            icon === 'styleA' && 'border border-[#a9d4f0] bg-[#cce8fb]',
          )}
        >
          <Icon name={icon} className="size-[15px]" />
        </button>
      ))}
    </nav>
  );
}

function StatusBar() {
  const cell = 'flex h-full shrink-0 items-center border-l border-[#d0d0d0]';
  return (
    <footer className="flex h-4 shrink-0 items-center overflow-hidden border-t border-[#cfcfcf] bg-[#f0f0f0] text-[10px] leading-3 whitespace-nowrap">
      <span className="flex w-[21px] shrink-0 pl-1.5">
        <svg viewBox="0 0 12 12" className="size-[11px]" fill="#fff" stroke="#c0503f" aria-hidden="true">
          <path d="M.5.5h9l2 2v9H.5zM3 .5h5.500v3.500H3zM3 7h6v4.500H3z" />
        </svg>
      </span>
      <span className={clsx(cell, 'w-[172px] pl-[7px]')}>Page 9 of 10</span>
      <span className={clsx(cell, 'w-[212px] pl-[7px]')}>1,015 words, 5,791 characters</span>
      <span className={clsx(cell, 'w-8')} />
      <span className={clsx(cell, 'w-[165px] pl-1.5')}>Default Page Style</span>
      <span className={clsx(cell, 'min-w-0 flex-1')} />
      <span className={clsx(cell, 'w-[46px]')} />
      <span className={clsx(cell, 'w-[30px] pl-[7px]')}>
        <svg viewBox="0 0 20 12" className="h-3 w-5" fill="none" stroke="#666" aria-hidden="true">
          <path d="M.5 2.500h11v6H.5z" stroke="#4aa0cf" />
          <path d="M14 .5h4M14 11.500h4M16 .5v11" />
        </svg>
      </span>
      <span className={clsx(cell, 'w-5')} />
      <span className={clsx(cell, 'w-[126px] gap-1 pl-[9px]')}>
        <svg viewBox="0 0 10 8" className="mb-1 h-2 w-[10px]" fill="none" stroke="#666" aria-hidden="true">
          <path d="M3 2.500h6.500v5H3V4" />
          <path d="M0 2.500h5M2.500 0v5" stroke={BLUE} />
        </svg>
        <span className="pt-1">2.04 / 0.15</span>
      </span>
      <span className="flex h-full w-[117px] shrink-0 items-center gap-1 pl-0.5">
        <svg viewBox="0 0 10 8" className="mb-1 h-2 w-[10px]" fill="none" stroke="#666" aria-hidden="true">
          <path d="M3 2.500h6.500v3H3z" />
          <path d="M0 4h2M3 .5h6M3 7.500h7M1.500 1v6" stroke={BLUE} />
        </svg>
        <span className="pt-1">2.12 x 1.31</span>
      </span>
      <span className={clsx(cell, 'w-[60px] gap-1 pl-1')}>
        <svg viewBox="0 0 8 11" className="h-[11px] w-2" aria-hidden="true">
          <path d="M0 0h5l3 3v8H0z" fill="#1464a5" />
        </svg>
        {[0, 1].map((n) => (
          <svg key={n} viewBox="0 0 16 11" className="h-[11px] w-[17px]" fill="#fff" stroke="#555" aria-hidden="true">
            <path d={n ? 'M.5 10.500V3l2-2.500H8v10zM8 .5h5.500l2 2.500v7.500H8z' : 'M.5.5H5l2 2v8H.5zM9 .5h4.500l2 2v8H9z'} />
          </svg>
        ))}
      </span>
      <div className={clsx(cell, 'w-[96px] justify-between px-1')}>
        <button aria-label="Zoom out" className="text-[13px]">
          −
        </button>
        <span className="relative flex items-center">
          <input
            aria-label="Zoom"
            type="range"
            defaultValue={48}
            className="h-px w-[64px] appearance-none bg-[#777] [&::-webkit-slider-thumb]:h-2 [&::-webkit-slider-thumb]:w-1 [&::-webkit-slider-thumb]:appearance-none [&::-webkit-slider-thumb]:border [&::-webkit-slider-thumb]:border-[#666] [&::-webkit-slider-thumb]:bg-[#ddd]"
          />
          <span className="absolute left-3 h-1 w-px bg-[#777]" />
        </span>
        <button aria-label="Zoom in" className="text-[13px]">
          +
        </button>
      </div>
      <span className={clsx(cell, 'w-9 pl-1')}>100%</span>
    </footer>
  );
}

export default function App() {
  return (
    <div className="flex h-screen flex-col overflow-hidden border-y-20 border-black bg-[#efefef] font-['Open_Sans','Noto_Sans',sans-serif] text-[#1c1c1c]">
      <Header />
      <main className="flex min-h-0 flex-1">
        <div className="relative flex min-w-0 flex-1 flex-col pt-0.5">
          <span className="absolute top-[7px] left-2 size-1 border-b border-l border-[#444]" />
          <Ruler />
          <Page />
        </div>
        <div className="flex w-[15px] shrink-0 flex-col items-center justify-end border-l border-[#e4e4e4] pb-[86px]">
          <span className="h-[26px] w-1 bg-[#868686]" />
        </div>
        <div className="relative flex">
          <button
            aria-label="Hide sidebar"
            className="absolute top-[237px] left-0 flex h-[49px] w-[5px] items-center justify-center bg-[#666]"
          >
            <svg viewBox="0 0 4 6" className="h-[5px] w-1" aria-hidden="true">
              <path d="M0 0l4 3-4 3z" fill="#fff" />
            </svg>
          </button>
          <StylesPanel />
        </div>
        <TabBar />
      </main>
      <div className="flex h-[27px] shrink-0 items-center border-t border-[#cfcfcf] bg-[#f2f2f2] pb-0.5 pl-[3px]">
        <Tools items={DRAWING} tight />
      </div>
      <StatusBar />
    </div>
  );
}
